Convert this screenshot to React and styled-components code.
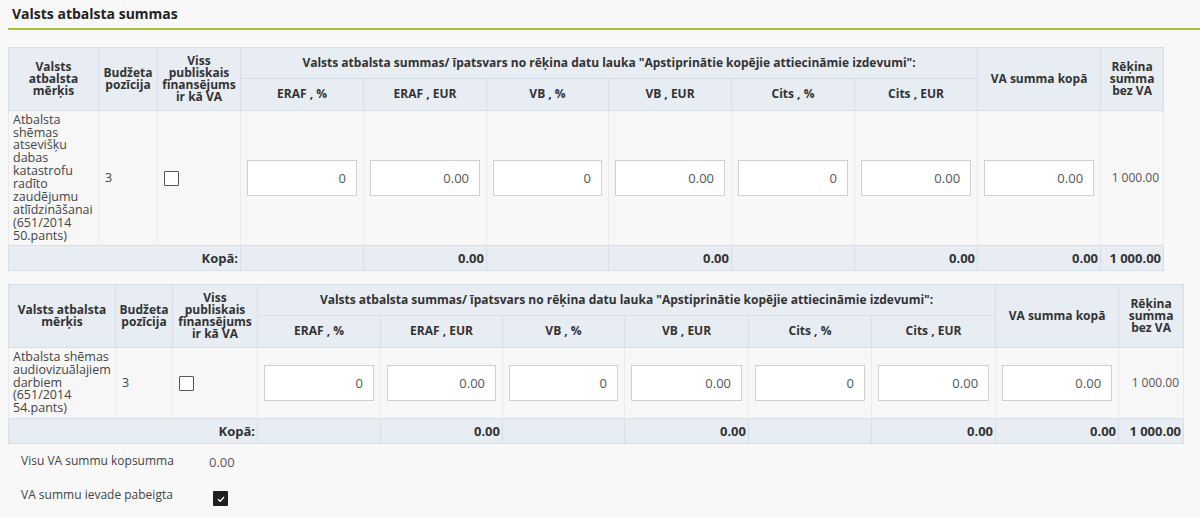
import React from 'react';
import styled, { createGlobalStyle } from 'styled-components';

const GlobalStyle = createGlobalStyle`
  body {
    margin: 0;
    background: #f8f8f8;
    font-family: "Open Sans", "Noto Sans", "Liberation Sans", sans-serif;
    color: #333;
  }
`;

const Page = styled.div`
  padding: 0 0 0 8px;
`;

const Title = styled.h2`
  margin: 0;
  padding: 4px 4px 0;
  height: 24px;
  font-size: 14px;
  font-weight: 700;
  color: #222;
  border-bottom: 2px solid #a6c23c;
`;

const Table = styled.table`
  border-collapse: collapse;
  table-layout: fixed;
  width: ${({ $width }) => $width}px;
  margin-top: ${({ $top }) => $top}px;
  font-size: 12px;
  border: 1px solid #d6dfe7;
`;

const Th = styled.th`
  background: #e7edf3;
  border: 1px solid #d6dfe7;
  font-weight: 700;
  line-height: 1.02;
  color: #333;
  padding: 0 3px;
  height: ${({ $h }) => $h || 30}px;
  text-align: center;
  vertical-align: middle;
`;

const Td = styled.td`
  background: #f7f7f7;
  border-left: 1px solid #ebebeb;
  border-right: 1px solid #ebebeb;
  padding: 0 ${({ $pad }) => ($pad ? 4 : 6)}px;
  line-height: 1.03;
  font-size: 12.5px;
  color: #444;
  vertical-align: middle;
  height: ${({ $h }) => $h}px;
  text-align: ${({ $align }) => $align || 'left'};
`;

const Amount = styled(Td)`
  padding: 0 4px 0 0;
  white-space: nowrap;
  font-size: 12px;
  color: #555;
`;

const TotalTd = styled.td`
  background: #e7edf3;
  border: 1px solid #d6dfe7;
  height: 24px;
  padding: 0 2px;
  font-size: 13px;
  font-weight: 700;
  color: #333;
  text-align: right;
  white-space: nowrap;
`;

const NumInput = styled.input`
  box-sizing: border-box;
  width: 100%;
  height: 36px;
  border: 1px solid #d0d0d0;
  background: #fff;
  text-align: right;
  padding: 0 10px;
  font-family: inherit;
  font-size: 13px;
  color: #555;
  outline: none;
`;

const Box = styled.span`
  display: inline-block;
  width: 13px;
  height: 13px;
  border: 1px solid #555;
  background: #fff;
  border-radius: 1px;
  vertical-align: middle;
`;

const Footer = styled.div`
  padding: 6px 0 0 13px;
  display: grid;
  grid-template-columns: 188px auto;
  row-gap: 12px;
  font-size: 12px;
  color: #444;
  align-items: center;
`;

const FooterValue = styled.span`
  font-size: 13px;
  color: #555;
  padding-top: 3px;
`;

const Checked = styled.span`
  display: inline-flex;
  align-items: center;
  justify-content: center;
  width: 15px;
  height: 15px;
  margin: 8px 0 0 4px;
  background: #1f1f1f;
  border-radius: 1px;
`;

const subCols = ['ERAF , %', 'ERAF , EUR', 'VB , %', 'VB , EUR', 'Cits , %', 'Cits , EUR'];
const values = ['0', '0.00', '0', '0.00', '0', '0.00'];

const SupportTable = ({ cols, width, top, goalHeader, goal, rowHeight }) => (
  <Table $width={width} $top={top}>
    <colgroup>
      {cols.map((w, i) => (
        <col key={i} style={{ width: w }} />
      ))}
    </colgroup>
    <thead>
      <tr>
        <Th rowSpan={2}>{goalHeader}</Th>
        <Th rowSpan={2}>
          Budžeta
          <br />
          pozīcija
        </Th>
        <Th rowSpan={2}>Viss publiskais finansējums ir kā VA</Th>
        <Th colSpan={6} $h={30}>
          Valsts atbalsta summas/ īpatsvars no rēķina datu lauka "Apstiprinātie kopējie attiecināmie izdevumi":
        </Th>
        <Th rowSpan={2}>VA summa kopā</Th>
        <Th rowSpan={2}>
          Rēķina
          <br />
          summa
          <br />
          bez VA
        </Th>
      </tr>
      <tr>
        {subCols.map((c) => (
          <Th key={c} $h={31}>
            {c}
          </Th>
        ))}
      </tr>
    </thead>
    <tbody>
      <tr>
        <Td $h={rowHeight} $pad>
          {goal}
        </Td>
        <Td>3</Td>
        <Td>
          <Box />
        </Td>
        {values.map((v, i) => (
          <Td key={i}>
            <NumInput readOnly value={v} />
          </Td>
        ))}
        <Td>
          <NumInput readOnly value="0.00" />
        </Td>
        <Amount $align="right">1 000.00</Amount>
      </tr>
      <tr>
        <TotalTd colSpan={3}>Kopā:</TotalTd>
        <TotalTd />
        <TotalTd>0.00</TotalTd>
        <TotalTd />
        <TotalTd>0.00</TotalTd>
        <TotalTd />
        <TotalTd>0.00</TotalTd>
        <TotalTd>0.00</TotalTd>
        <TotalTd>1 000.00</TotalTd>
      </tr>
    </tbody>
  </Table>
);

const App = () => (
  <>
    <GlobalStyle />
    <Page>
      <Title>Valsts atbalsta summas</Title>
      <SupportTable
        width={1155}
        top={17}
        cols={[90, 59, 83, 123, 123, 122, 123, 123, 123, 123, 63]}
        goalHeader={
          <>
            Valsts
            <br />
            atbalsta
            <br />
            mērķis
          </>
        }
        goal="Atbalsta shēmas atsevišķu dabas katastrofu radīto zaudējumu atlīdzināšanai (651/2014 50.pants)"
        rowHeight={134}
      />
      <SupportTable
        width={1175}
        top={13}
        cols={[107, 57, 85, 123, 122, 122, 124, 123, 124, 123, 65]}
        goalHeader={
          <>
            Valsts atbalsta
            <br />
            mērķis
          </>
        }
        goal="Atbalsta shēmas audiovizuālajiem darbiem (651/2014 54.pants)"
        rowHeight={70}
      />
      <Footer>
        <span>Visu VA summu kopsumma</span>
        <FooterValue>0.00</FooterValue>
        <span>VA summu ievade pabeigta</span>
        <Checked>
          <svg width="10" height="10" viewBox="0 0 10 10">
            <path d="M2 5.2 L4.2 7.3 L8 3" stroke="#fff" strokeWidth="1.3" fill="none" />
          </svg>
        </Checked>
      </Footer>
    </Page>
  </>
);

export default App;
